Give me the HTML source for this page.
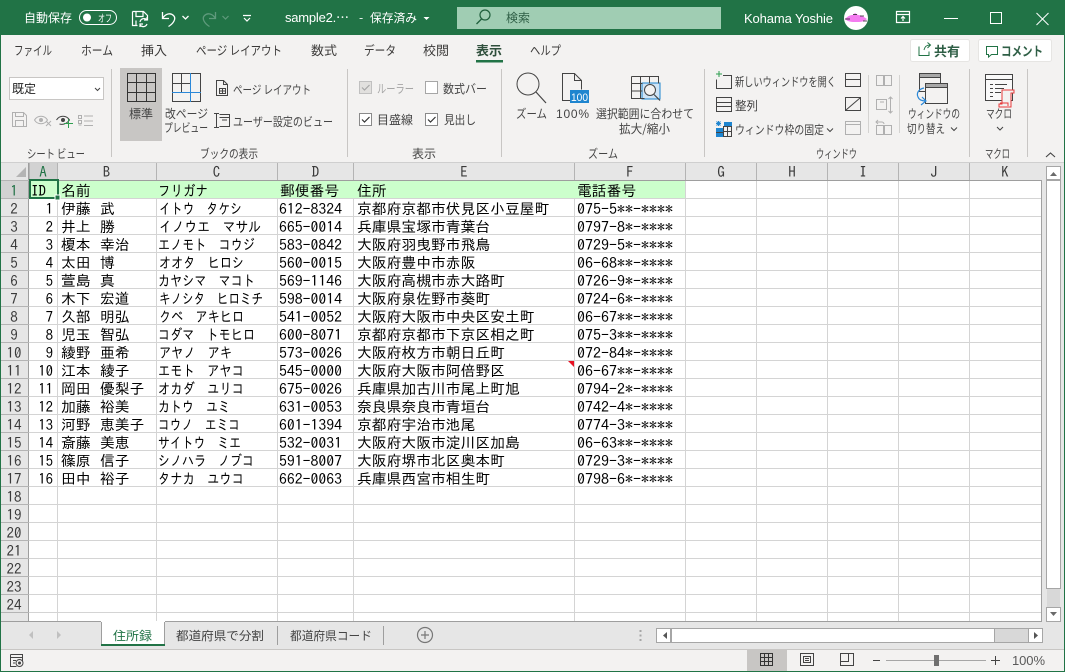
<!DOCTYPE html>
<html lang="ja"><head><meta charset="utf-8"><title>sample2</title>
<style>
html,body{margin:0;padding:0;background:#f3f2f1;overflow:hidden}
svg{display:block}
.c{font:14.8px "IPAGothic","Noto Sans CJK JP",monospace;fill:#000}
.h{font:15px "IPAGothic","Noto Sans CJK JP",monospace;fill:#3a3a3a;text-anchor:middle}
.r{font:12px "Noto Sans CJK JP","Liberation Sans",sans-serif;fill:#444}
.d{fill:#a6a6a6}
.t{font:12.5px "Noto Sans CJK JP","Liberation Sans",sans-serif;fill:#3b3a39}
.w{font:12px "Noto Sans CJK JP","Liberation Sans",sans-serif;fill:#fff}
.i{fill:none;stroke:#444;stroke-width:1}
.g{fill:none;stroke:#b0b0b0;stroke-width:1}
.k{fill:none;stroke:#fff;stroke-width:1.2}
</style></head><body>
<svg xmlns="http://www.w3.org/2000/svg" width="1065" height="672" viewBox="0 0 1065 672">
<rect width="1065" height="672" fill="#f3f2f1"/>

<!-- title bar -->
<rect width="1065" height="35" fill="#217346"/>
<text class="w" x="24" y="22" textLength="48" lengthAdjust="spacingAndGlyphs">自動保存</text>
<rect x="79.500" y="10.500" width="37" height="14" rx="7" fill="none" stroke="#fff"/>
<circle cx="87" cy="17.500" r="4" fill="#fff"/>
<text class="w" x="98" y="22" style="font-size:10px" textLength="14" lengthAdjust="spacingAndGlyphs">オフ</text>
<path class="k" d="M132.500 11.500h11l4 4v5M132.500 11.500v14h5M136 11.500v5h7v-5M136 25.500v-5"/>
<path class="k" d="M140 22a4 4 0 0 1 7-2M147 24a4 4 0 0 1-7 1M147 17v3h-3M140 27v-3h3"/>
<path d="M162.500 12v6.500h6.500M162.500 18.500c3-5 8-6 11-3c3 3 0 8-5 11" fill="none" stroke="#fff" stroke-width="1.300"/>
<path d="M182.500 16l3 3l3-3" fill="none" stroke="#fff" stroke-width="1.300"/>
<path d="M215.500 12v6.500h-6.500M215.500 18.500c-3-5-8-6-11-3c-3 3 0 8 5 11" fill="none" stroke="#5f9a7c" stroke-width="1.300"/>
<path d="M222.500 16l3 3l3-3" fill="none" stroke="#5f9a7c" stroke-width="1.200"/>
<path d="M243 15.500h8M244 18l3 3l3-3" fill="none" stroke="#fff" stroke-width="1.200"/>
<text class="w" x="285" y="22" style="font-family:'Liberation Sans','Noto Sans CJK JP',sans-serif;font-size:13px" textLength="64">sample2.⋯</text>
<text class="w" x="359" y="22">-</text>
<text class="w" x="370" y="22" textLength="47" lengthAdjust="spacingAndGlyphs">保存済み</text>
<path d="M423.500 17h6l-3 3z" fill="#fff"/>
<rect x="457" y="7" width="264" height="22" fill="#a0cdb3"/>
<circle cx="485" cy="15" r="5" fill="none" stroke="#1f5f3c" stroke-width="1.200"/>
<path d="M481.500 19l-5 5" stroke="#1f5f3c" stroke-width="1.300"/>
<text class="r" x="506" y="22" textLength="24" lengthAdjust="spacingAndGlyphs" style="fill:#2f5f46">検索</text>
<text x="744" y="23" style="font:13px 'Liberation Sans',sans-serif;fill:#fff" textLength="89">Kohama Yoshie</text>
<circle cx="856" cy="18" r="12" fill="#fff"/>
<path d="M845 19c3-3 5-4 8-4l2-2l3 2c3 0 6 2 9 4c-3 3-7 3-11 3c-4 0-8 0-11-3z" fill="#f47cf0"/>
<path d="M845 19h5M853 14.500h4M860 16h4M863 21h4" stroke="#222" stroke-width=".8" fill="none"/>
<path class="k" d="M896.500 11.500h13v11h-13zM896.500 14.500h13M903 21v-4M901 18.500l2-2l2 2" stroke-width="1"/>
<path d="M944 18.500h14" stroke="#fff"/>
<rect x="990.500" y="12.500" width="11" height="11" fill="none" stroke="#fff"/>
<path d="M1036.500 13l12 12M1048.500 13l-12 12" stroke="#fff"/>

<!-- ribbon tabs -->
<text class="t" x="14" y="55" textLength="38" lengthAdjust="spacingAndGlyphs">ファイル</text>
<text class="t" x="81" y="55" textLength="32" lengthAdjust="spacingAndGlyphs">ホーム</text>
<text class="t" x="141" y="55" textLength="26" lengthAdjust="spacingAndGlyphs">挿入</text>
<text class="t" x="196" y="55" textLength="86" lengthAdjust="spacingAndGlyphs">ページ レイアウト</text>
<text class="t" x="311" y="55" textLength="26" lengthAdjust="spacingAndGlyphs">数式</text>
<text class="t" x="364" y="55" textLength="32" lengthAdjust="spacingAndGlyphs">データ</text>
<text class="t" x="423" y="55" textLength="26" lengthAdjust="spacingAndGlyphs">校閲</text>
<text class="t" x="476" y="55" textLength="26" lengthAdjust="spacingAndGlyphs" style="font-weight:700;fill:#2f4f3c">表示</text>
<rect x="476" y="60" width="27" height="2.500" fill="#217346"/>
<text class="t" x="530" y="55" textLength="31" lengthAdjust="spacingAndGlyphs">ヘルプ</text>

<rect x="910.500" y="39.500" width="59" height="22" rx="2" fill="#fff" stroke="#e6e5e3"/>
<path d="M919 46.500v9h10v-4M924 50c1-4 3-5 6-5M927.500 42.500l3 2.500l-3 3" fill="none" stroke="#217346"/>
<text x="934" y="56" style="font:700 13px 'Noto Sans CJK JP',sans-serif;fill:#2f5f46" textLength="26" lengthAdjust="spacingAndGlyphs">共有</text>
<rect x="978.500" y="39.500" width="73" height="22" rx="2" fill="#fff" stroke="#e6e5e3"/>
<path d="M986.500 46.500h11v8h-6l-3 2.500v-2.500h-2z" fill="none" stroke="#217346"/>
<text x="1001" y="56" style="font:700 13px 'Noto Sans CJK JP',sans-serif;fill:#2f5f46" textLength="42" lengthAdjust="spacingAndGlyphs">コメント</text>

<!-- ribbon: sheet view -->
<rect x="9.500" y="77.500" width="94" height="22" fill="#fff" stroke="#c8c6c4"/>
<text class="r" x="12" y="93" textLength="24" lengthAdjust="spacingAndGlyphs" style="fill:#222">既定</text>
<path d="M95 88l2.500 2.500l2.500-2.500" class="i"/>
<path class="g" d="M12.500 112.500h11l3 3v11h-14zM15.500 112.500v4h8v-4M15.500 126.500v-6h8v6"/>
<path class="g" d="M34.500 120c3-5 10-5 13 0c-3 5-10 5-13 0zM46 121l5 5M51 121l-5 5"/><circle cx="41" cy="120" r="2" fill="#b0b0b0"/>
<path class="i" d="M56.500 120c3-5 10-5 13 0c-3 4-7 5-10 4"/><circle cx="63" cy="120" r="2" fill="#444"/>
<path d="M68.500 119v9M64 123.500h9" stroke="#2e9e4f"/>
<path class="g" d="M78.500 115.500h3v3h-3zM78.500 120.500h3v3h-3zM78.500 125h3M84 116h9M84 121h9M84 125.500h9"/>
<text class="r" x="27" y="158" textLength="58" lengthAdjust="spacingAndGlyphs">シート ビュー</text>
<rect x="111" y="69" width="1" height="88" fill="#c8c6c4"/>

<!-- ribbon: book views -->
<rect x="120" y="68" width="42" height="73" fill="#c8c6c4"/>
<path class="i" d="M127.500 73.500h28v28h-28zM127.500 82.500h28M127.500 92.500h28M136.500 73.500v28M146.500 73.500v28" style="stroke:#333"/>
<text class="r" x="129" y="118" textLength="24" lengthAdjust="spacingAndGlyphs">標準</text>
<path class="i" d="M172.500 73.500h28v28h-28zM172.500 83.500h18M181.500 73.500v19"/>
<path d="M172 92.500h29M190.500 73v29" stroke="#2b88d8" fill="none"/>
<text class="r" x="165" y="118" textLength="43" lengthAdjust="spacingAndGlyphs">改ページ</text>
<text class="r" x="164" y="132" textLength="44" lengthAdjust="spacingAndGlyphs">プレビュー</text>
<path class="i" d="M216.500 80.500h7l4 4v11h-11zM223.500 80.500v4h4M219.500 88.500h6v5h-6zM219.500 91h6M222.500 88.500v5"/>
<text class="r" x="233" y="94" textLength="78" lengthAdjust="spacingAndGlyphs">ページ レイアウト</text>
<path class="i" d="M214 113.500h5M214 127.500h5M216.500 113.500v14M219.500 114.500h10v12h-10M219.500 117.500h10M222 120h5"/>
<text class="r" x="233" y="126" textLength="100" lengthAdjust="spacingAndGlyphs">ユーザー設定のビュー</text>
<text class="r" x="200" y="158" textLength="58" lengthAdjust="spacingAndGlyphs">ブックの表示</text>
<rect x="347" y="69" width="1" height="88" fill="#c8c6c4"/>

<!-- ribbon: show -->
<rect x="359.500" y="81.500" width="12" height="12" fill="#e1e0de" stroke="#c0c0c0"/>
<path d="M362 87.500l2.500 2.500l5-5" fill="none" stroke="#a6a6a6" stroke-width="1.200"/>
<text class="r d" x="377" y="93" textLength="37" lengthAdjust="spacingAndGlyphs" style="fill:#a6a6a6">ルーラー</text>
<rect x="425.500" y="81.500" width="12" height="12" fill="#fff" stroke="#a6a6a6"/>
<text class="r" x="443" y="93" textLength="44" lengthAdjust="spacingAndGlyphs">数式バー</text>
<rect x="359.500" y="113.500" width="12" height="12" fill="#fff" stroke="#8a8a8a"/>
<path d="M362 119.500l2.500 2.500l5-5" fill="none" stroke="#333" stroke-width="1.200"/>
<text class="r" x="377" y="124" textLength="36" lengthAdjust="spacingAndGlyphs">目盛線</text>
<rect x="425.500" y="113.500" width="12" height="12" fill="#fff" stroke="#8a8a8a"/>
<path d="M428 119.500l2.500 2.500l5-5" fill="none" stroke="#333" stroke-width="1.200"/>
<text class="r" x="444" y="124" textLength="32" lengthAdjust="spacingAndGlyphs">見出し</text>
<text class="r" x="412" y="158" textLength="24" lengthAdjust="spacingAndGlyphs">表示</text>
<rect x="501" y="69" width="1" height="88" fill="#c8c6c4"/>

<!-- ribbon: zoom -->
<circle cx="528" cy="84" r="11" fill="none" stroke="#444" stroke-width="1"/>
<path d="M536 92l10 11" stroke="#444" stroke-width="1.200"/>
<text class="r" x="516" y="118" textLength="31" lengthAdjust="spacingAndGlyphs">ズーム</text>
<path class="i" d="M570 100.500h-7.500v-27h12l7 7v9M574.500 73.500v7h7"/>
<rect x="570" y="90" width="19" height="13" fill="#1e85cf"/>
<text x="571" y="101" style="font:11px 'Liberation Sans',sans-serif;fill:#fff" textLength="17" lengthAdjust="spacingAndGlyphs">100</text>
<text x="556" y="118" style="font:12px 'Liberation Sans',sans-serif;fill:#444" textLength="33">100%</text>
<rect x="642" y="83" width="18" height="16" fill="#cfe4f5" stroke="#1e85cf"/>
<path class="i" d="M631.500 76.500h27v7M631.500 76.500v22h13M631.500 83.500h11M631.500 91h11M640.500 76.500v22M649.500 76.500v7"/>
<circle cx="650" cy="90" r="5.500" fill="#f3f2f1" stroke="#444"/>
<path d="M654 94.500l6 6" stroke="#444" stroke-width="1.200"/>
<text class="r" x="596" y="118" textLength="98" lengthAdjust="spacingAndGlyphs">選択範囲に合わせて</text>
<text class="r" x="619" y="133" textLength="51" lengthAdjust="spacingAndGlyphs">拡大/縮小</text>
<text class="r" x="588" y="158" textLength="30" lengthAdjust="spacingAndGlyphs">ズーム</text>
<rect x="704" y="69" width="1" height="88" fill="#c8c6c4"/>

<!-- ribbon: window -->
<path class="i" d="M723 75.500h8.500v13h-15v-9"/><path d="M716 74h6M719 71v6" stroke="#2e9e4f" fill="none"/>
<text class="r" x="735" y="86" textLength="101" lengthAdjust="spacingAndGlyphs">新しいウィンドウを開く</text>
<path class="i" d="M716.500 97.500h15v14h-15zM716.500 102.500h15M716.500 106.500h15"/>
<text class="r" x="735" y="110" textLength="23" lengthAdjust="spacingAndGlyphs">整列</text>
<rect x="716" y="128" width="7" height="9" fill="#1e85cf"/><rect x="724" y="122" width="8" height="4" fill="#1e85cf"/>
<path d="M716 123.500h5M718.500 121v5M716.500 121.500l4 4M720.500 121.500l-4 4" stroke="#1e85cf" fill="none"/>
<path class="i" d="M723.500 126.500h8v10h-8zM723.500 131.500h8M727.500 126.500v10M716 132.500h7"/>
<text class="r" x="735" y="134" textLength="89" lengthAdjust="spacingAndGlyphs">ウィンドウ枠の固定</text>
<path class="i" d="M827 128.500l3 3l3-3"/>
<path class="i" d="M845.500 73.500h15v13h-15zM845.500 79.500h15"/>
<path class="i" d="M845.500 97.500h15v13h-15zM846 110l14-12"/>
<path class="g" d="M845.500 121.500h15v13h-15zM845.500 124.500h15"/>
<rect x="868" y="75" width="1" height="58" fill="#d4d3d1"/>
<path class="g" d="M876.500 75.500h7v10h-7zM884.500 75.500h7v10h-7z"/>
<path class="g" d="M876.500 99.500h10v10h-10zM880 102h4M890.500 97v16M888.500 99l2-2l2 2M888.500 111l2 2l2-2"/>
<path class="g" d="M876.500 125.500h7v9h-7zM884.500 125.500h7v9h-7zM878 120l-2 2l2 2M876 122h6c1 0 2 1 2 2"/>
<rect x="899" y="75" width="1" height="58" fill="#d4d3d1"/>
<rect x="919.500" y="73.500" width="21" height="18" fill="#f3f2f1" stroke="#444"/><rect x="919.500" y="73.500" width="21" height="4" fill="#a8a8a8" stroke="#444"/>
<rect x="925.500" y="83.500" width="22" height="20" fill="#f3f2f1" stroke="#444"/><rect x="925.500" y="83.500" width="22" height="4" fill="#a8a8a8" stroke="#444"/>
<path d="M924 88c-5 1-8 5-6 9c1 3 4 4 8 4M921 105l5-4l-4-4" fill="none" stroke="#2b88d8" stroke-width="1.200"/>
<text class="r" x="908" y="118" textLength="52" lengthAdjust="spacingAndGlyphs">ウィンドウの</text>
<text class="r" x="907" y="133" textLength="38" lengthAdjust="spacingAndGlyphs">切り替え</text>
<path class="i" d="M951 127.500l3 3l3-3"/>
<text class="r" x="816" y="158" textLength="41" lengthAdjust="spacingAndGlyphs">ウィンドウ</text>
<rect x="969" y="69" width="1" height="88" fill="#c8c6c4"/>

<!-- ribbon: macro -->
<rect x="985.500" y="74.500" width="27" height="26" fill="#f9f9f9" stroke="#444"/>
<path class="i" d="M985.500 79.500h27M990 84.500h3M995 84.500h12M990 88.500h3M995 88.500h9M990 92.500h3M995 92.500h6M990 96.500h3"/>
<path d="M1002 90h12v3h-3v14h-12v-3h3zM1014 90v3M1000 103h8v3" fill="#f3f2f1" stroke="#e83a3a"/>
<text class="r" x="986" y="118" textLength="26" lengthAdjust="spacingAndGlyphs">マクロ</text>
<path class="i" d="M997 127l3 3l3-3"/>
<text class="r" x="985" y="158" textLength="25" lengthAdjust="spacingAndGlyphs">マクロ</text>
<rect x="1027" y="69" width="1" height="88" fill="#c8c6c4"/>
<path d="M1046 157l4.500-4l4.500 4" fill="none" stroke="#444" stroke-width="1.100"/>

<!-- sheet area -->
<rect x="0" y="162" width="1065" height="1" fill="#cfcfcf"/>
<rect x="1" y="163" width="1063" height="459" fill="#e6e6e6"/>
<rect x="29" y="181" width="1012" height="441" fill="#fff"/>
<rect x="29" y="163" width="28" height="17" fill="#d2d2d2"/>
<rect x="1" y="181" width="28" height="17" fill="#d2d2d2"/>
<path d="M26 167v10h-10z" fill="#b4b4b4"/>
<path d="M57.500 163v17M156.500 163v17M277.500 163v17M353.500 163v17M574.500 163v17M685.500 163v17M756.500 163v17M827.500 163v17M898.500 163v17M969.500 163v17M29.500 163v17" stroke="#b4b4b4" fill="none"/>
<rect x="29" y="180" width="1012" height="1" fill="#9e9e9e"/>
<rect x="28" y="163" width="1" height="459" fill="#9e9e9e"/>
<rect x="1" y="180" width="28" height="1" fill="#b4b4b4"/>
<path d="M1 198.500h28M1 216.500h28M1 234.500h28M1 252.500h28M1 270.500h28M1 288.500h28M1 306.500h28M1 324.500h28M1 342.500h28M1 360.500h28M1 378.500h28M1 396.500h28M1 414.500h28M1 432.500h28M1 450.500h28M1 468.500h28M1 486.500h28M1 504.500h28M1 522.500h28M1 540.500h28M1 558.500h28M1 576.500h28M1 594.500h28M1 612.500h28" stroke="#b4b4b4" fill="none"/>
<path d="M29 198.500h1012M29 216.500h1012M29 234.500h1012M29 252.500h1012M29 270.500h1012M29 288.500h1012M29 306.500h1012M29 324.500h1012M29 342.500h1012M29 360.500h1012M29 378.500h1012M29 396.500h1012M29 414.500h1012M29 432.500h1012M29 450.500h1012M29 468.500h1012M29 486.500h1012M29 504.500h1012M29 522.500h1012M29 540.500h1012M29 558.500h1012M29 576.500h1012M29 594.500h1012M29 612.500h1012M57.500 181v441M156.500 181v441M277.500 181v441M353.500 181v441M574.500 181v441M685.500 181v441M756.500 181v441M827.500 181v441M898.500 181v441M969.500 181v441" stroke="#d4d4d4" fill="none"/>
<rect x="29" y="181" width="656" height="17" fill="#ccffcc"/>
<rect x="1041" y="180" width="1" height="442" fill="#a0a0a0"/>

<!-- column headers -->
<text class="h" x="43" y="177" style="fill:#217346">A</text>
<text class="h" x="106.500" y="177">B</text>
<text class="h" x="216.500" y="177">C</text>
<text class="h" x="315.500" y="177">D</text>
<text class="h" x="464" y="177">E</text>
<text class="h" x="630" y="177">F</text>
<text class="h" x="721" y="177">G</text>
<text class="h" x="792" y="177">H</text>
<text class="h" x="863" y="177">I</text>
<text class="h" x="934" y="177">J</text>
<text class="h" x="1005" y="177">K</text>

<!-- row headers -->
<text class="h" x="14" y="196" style="fill:#217346">1</text>
<text class="h" x="14" y="214">2</text>
<text class="h" x="14" y="232">3</text>
<text class="h" x="14" y="250">4</text>
<text class="h" x="14" y="268">5</text>
<text class="h" x="14" y="286">6</text>
<text class="h" x="14" y="304">7</text>
<text class="h" x="14" y="322">8</text>
<text class="h" x="14" y="340">9</text>
<text class="h" x="14" y="358">10</text>
<text class="h" x="14" y="376">11</text>
<text class="h" x="14" y="394">12</text>
<text class="h" x="14" y="412">13</text>
<text class="h" x="14" y="430">14</text>
<text class="h" x="14" y="448">15</text>
<text class="h" x="14" y="466">16</text>
<text class="h" x="14" y="484">17</text>
<text class="h" x="14" y="502">18</text>
<text class="h" x="14" y="520">19</text>
<text class="h" x="14" y="538">20</text>
<text class="h" x="14" y="556">21</text>
<text class="h" x="14" y="574">22</text>
<text class="h" x="14" y="592">23</text>
<text class="h" x="14" y="610">24</text>

<!-- cells -->
<g class="c">
<g transform="translate(0,196)"><text x="31" textLength="15" lengthAdjust="spacingAndGlyphs">ID</text><text x="61">名前</text><text x="158" textLength="50" lengthAdjust="spacingAndGlyphs">フリガナ</text><text x="280">郵便番号</text><text x="357">住所</text><text x="577">電話番号</text></g>
<g transform="translate(0,214)"><text x="53" text-anchor="end">1</text><text x="61">伊藤</text><text x="100">武</text><text x="159" textLength="83" lengthAdjust="spacingAndGlyphs">イトウ　タケシ</text><text x="279" textLength="63" lengthAdjust="spacingAndGlyphs">612-8324</text><text x="357">京都府京都市伏見区小豆屋町</text><text x="577" textLength="96" lengthAdjust="spacingAndGlyphs">075-5**-****</text></g>
<g transform="translate(0,232)"><text x="53" text-anchor="end">2</text><text x="61">井上</text><text x="100">勝</text><text x="159" textLength="102" lengthAdjust="spacingAndGlyphs">イノウエ　マサル</text><text x="279" textLength="63" lengthAdjust="spacingAndGlyphs">665-0014</text><text x="357">兵庫県宝塚市青葉台</text><text x="577" textLength="96" lengthAdjust="spacingAndGlyphs">0797-8*-****</text></g>
<g transform="translate(0,250)"><text x="53" text-anchor="end">3</text><text x="61">榎本</text><text x="100">幸治</text><text x="158" textLength="97" lengthAdjust="spacingAndGlyphs">エノモト　コウジ</text><text x="279" textLength="63" lengthAdjust="spacingAndGlyphs">583-0842</text><text x="357">大阪府羽曳野市飛鳥</text><text x="577" textLength="96" lengthAdjust="spacingAndGlyphs">0729-5*-****</text></g>
<g transform="translate(0,268)"><text x="53" text-anchor="end">4</text><text x="61">太田</text><text x="100">博</text><text x="159" textLength="85" lengthAdjust="spacingAndGlyphs">オオタ　ヒロシ</text><text x="279" textLength="63" lengthAdjust="spacingAndGlyphs">560-0015</text><text x="357">大阪府豊中市赤阪</text><text x="577" textLength="96" lengthAdjust="spacingAndGlyphs">06-68**-****</text></g>
<g transform="translate(0,286)"><text x="53" text-anchor="end">5</text><text x="61">萱島</text><text x="100">真</text><text x="158" textLength="97" lengthAdjust="spacingAndGlyphs">カヤシマ　マコト</text><text x="279" textLength="63" lengthAdjust="spacingAndGlyphs">569-1146</text><text x="357">大阪府高槻市赤大路町</text><text x="577" textLength="96" lengthAdjust="spacingAndGlyphs">0726-9*-****</text></g>
<g transform="translate(0,304)"><text x="53" text-anchor="end">6</text><text x="61">木下</text><text x="100">宏道</text><text x="159" textLength="104" lengthAdjust="spacingAndGlyphs">キノシタ　ヒロミチ</text><text x="279" textLength="63" lengthAdjust="spacingAndGlyphs">598-0014</text><text x="357">大阪府泉佐野市葵町</text><text x="577" textLength="96" lengthAdjust="spacingAndGlyphs">0724-6*-****</text></g>
<g transform="translate(0,322)"><text x="53" text-anchor="end">7</text><text x="61">久部</text><text x="100">明弘</text><text x="159" textLength="85" lengthAdjust="spacingAndGlyphs">クベ　アキヒロ</text><text x="279" textLength="63" lengthAdjust="spacingAndGlyphs">541-0052</text><text x="357">大阪府大阪市中央区安土町</text><text x="577" textLength="96" lengthAdjust="spacingAndGlyphs">06-67**-****</text></g>
<g transform="translate(0,340)"><text x="53" text-anchor="end">8</text><text x="61">児玉</text><text x="100">智弘</text><text x="158" textLength="97" lengthAdjust="spacingAndGlyphs">コダマ　トモヒロ</text><text x="279" textLength="63" lengthAdjust="spacingAndGlyphs">600-8071</text><text x="357">京都府京都市下京区相之町</text><text x="577" textLength="96" lengthAdjust="spacingAndGlyphs">075-3**-****</text></g>
<g transform="translate(0,358)"><text x="53" text-anchor="end">9</text><text x="61">綾野</text><text x="100">亜希</text><text x="159" textLength="73" lengthAdjust="spacingAndGlyphs">アヤノ　アキ</text><text x="279" textLength="63" lengthAdjust="spacingAndGlyphs">573-0026</text><text x="357">大阪府枚方市朝日丘町</text><text x="577" textLength="96" lengthAdjust="spacingAndGlyphs">072-84*-****</text></g>
<g transform="translate(0,376)"><text x="53" text-anchor="end">10</text><text x="61">江本</text><text x="100">綾子</text><text x="158" textLength="86" lengthAdjust="spacingAndGlyphs">エモト　アヤコ</text><text x="279" textLength="63" lengthAdjust="spacingAndGlyphs">545-0000</text><text x="357">大阪府大阪市阿倍野区</text><text x="577" textLength="96" lengthAdjust="spacingAndGlyphs">06-67**-****</text></g>
<g transform="translate(0,394)"><text x="53" text-anchor="end">11</text><text x="61">岡田</text><text x="100">優梨子</text><text x="158" textLength="86" lengthAdjust="spacingAndGlyphs">オカダ　ユリコ</text><text x="279" textLength="63" lengthAdjust="spacingAndGlyphs">675-0026</text><text x="357">兵庫県加古川市尾上町旭</text><text x="577" textLength="96" lengthAdjust="spacingAndGlyphs">0794-2*-****</text></g>
<g transform="translate(0,412)"><text x="53" text-anchor="end">12</text><text x="61">加藤</text><text x="100">裕美</text><text x="158" textLength="72" lengthAdjust="spacingAndGlyphs">カトウ　ユミ</text><text x="279" textLength="63" lengthAdjust="spacingAndGlyphs">631-0053</text><text x="357">奈良県奈良市青垣台</text><text x="577" textLength="96" lengthAdjust="spacingAndGlyphs">0742-4*-****</text></g>
<g transform="translate(0,430)"><text x="53" text-anchor="end">13</text><text x="61">河野</text><text x="100">恵美子</text><text x="158" textLength="82" lengthAdjust="spacingAndGlyphs">コウノ　エミコ</text><text x="279" textLength="63" lengthAdjust="spacingAndGlyphs">601-1394</text><text x="357">京都府宇治市池尾</text><text x="577" textLength="96" lengthAdjust="spacingAndGlyphs">0774-3*-****</text></g>
<g transform="translate(0,448)"><text x="53" text-anchor="end">14</text><text x="61">斎藤</text><text x="100">美恵</text><text x="158" textLength="83" lengthAdjust="spacingAndGlyphs">サイトウ　ミエ</text><text x="279" textLength="63" lengthAdjust="spacingAndGlyphs">532-0031</text><text x="357">大阪府大阪市淀川区加島</text><text x="577" textLength="96" lengthAdjust="spacingAndGlyphs">06-63**-****</text></g>
<g transform="translate(0,466)"><text x="53" text-anchor="end">15</text><text x="61">篠原</text><text x="100">信子</text><text x="158" textLength="96" lengthAdjust="spacingAndGlyphs">シノハラ　ノブコ</text><text x="279" textLength="63" lengthAdjust="spacingAndGlyphs">591-8007</text><text x="357">大阪府堺市北区奥本町</text><text x="577" textLength="96" lengthAdjust="spacingAndGlyphs">0729-3*-****</text></g>
<g transform="translate(0,484)"><text x="53" text-anchor="end">16</text><text x="61">田中</text><text x="100">裕子</text><text x="158" textLength="86" lengthAdjust="spacingAndGlyphs">タナカ　ユウコ</text><text x="279" textLength="63" lengthAdjust="spacingAndGlyphs">662-0063</text><text x="357">兵庫県西宮市相生町</text><text x="577" textLength="96" lengthAdjust="spacingAndGlyphs">0798-6*-****</text></g>
</g>
<path d="M568 361h6v6z" fill="#e81123"/>

<!-- selected cell -->
<rect x="30" y="180" width="28" height="18" fill="none" stroke="#217346" stroke-width="2"/>
<rect x="55" y="195" width="5" height="5" fill="#217346" stroke="#fff"/>

<!-- vertical scrollbar -->
<rect x="1046.500" y="166.500" width="14" height="13" fill="#fff" stroke="#a6a6a6"/>
<path d="M1050 176l3.500-4l3.500 4z" fill="#6a6a6a"/>
<rect x="1046.500" y="180.500" width="14" height="408" fill="#fff" stroke="#a6a6a6"/>
<rect x="1047" y="589" width="13" height="18" fill="#d8d8d8"/>
<rect x="1046.500" y="607.500" width="14" height="14" fill="#fff" stroke="#a6a6a6"/>
<path d="M1050 612h7l-3.500 4z" fill="#6a6a6a"/>

<!-- tabs bar -->
<rect x="1" y="622" width="1063" height="28" fill="#e6e6e6"/>
<rect x="1" y="621" width="1041" height="1" fill="#9e9e9e"/>
<rect x="1" y="649" width="1063" height="1" fill="#c8c6c4"/>
<path d="M33 631v8l-4-4z" fill="#c0c0c0"/><path d="M57 631v8l4-4z" fill="#c0c0c0"/>
<rect x="101" y="621" width="64" height="24" fill="#fff"/>
<path d="M101.500 622v24M164.500 622v24" stroke="#9e9e9e"/>
<rect x="101" y="644" width="64" height="2" fill="#217346"/>
<text class="r" x="113" y="640" textLength="39" lengthAdjust="spacingAndGlyphs" style="fill:#217346">住所録</text>
<text class="r" x="176" y="640" textLength="88" lengthAdjust="spacingAndGlyphs">都道府県で分割</text>
<rect x="277" y="626" width="1" height="19" fill="#9e9e9e"/>
<text class="r" x="290" y="640" textLength="82" lengthAdjust="spacingAndGlyphs">都道府県コード</text>
<rect x="383" y="626" width="1" height="19" fill="#9e9e9e"/>
<circle cx="425" cy="635" r="7.500" fill="none" stroke="#777" stroke-width="1.200"/>
<path d="M421 635h8M425 631v8" stroke="#777" stroke-width="1.200"/>
<path d="M640.500 630v2M640.500 634.500v2M640.500 639v2" stroke="#a6a6a6" stroke-width="2"/>
<rect x="656.500" y="628.500" width="386" height="14" fill="#d8d8d8" stroke="#a6a6a6"/>
<rect x="671.500" y="628.500" width="323" height="14" fill="#fff" stroke="#a6a6a6"/>
<rect x="656.500" y="628.500" width="14" height="14" fill="#fff" stroke="#a6a6a6"/>
<path d="M667 632v7l-4-3.500z" fill="#555"/>
<rect x="1028.500" y="628.500" width="14" height="14" fill="#fff" stroke="#a6a6a6"/>
<path d="M1034 632v7l4-3.500z" fill="#555"/>

<!-- status bar -->
<path class="i" d="M10.500 654.500h12v9M10.500 654.500v12h6M10.500 657.500h12M13 660.500h3M13 663h2"/>
<circle cx="19.500" cy="663" r="3.500" fill="#f3f2f1" stroke="#444"/><circle cx="19.500" cy="663" r="1.500" fill="#444"/>
<rect x="747" y="650" width="40" height="21" fill="#c8c6c4"/>
<path d="M760.500 653.500h12v12h-12zM760.500 657.500h12M760.500 661.500h12M764.500 653.500v12M768.500 653.500v12" fill="none" stroke="#333"/>
<path class="i" d="M800.500 653.500h13v12h-13zM803.500 656.500h7v6h-7zM805 658.500h4M805 660.500h4"/>
<path class="i" d="M840.500 653.500h13v12h-13zM840.500 661.500h8v-8"/>
<path d="M873 660.500h7" stroke="#444"/>
<rect x="886" y="660" width="100" height="1" fill="#a6a6a6"/>
<rect x="934" y="655" width="5" height="11" fill="#707070"/>
<path d="M991 660.500h9M995.500 656v9" stroke="#444"/>
<text x="1012" y="665" style="font:13px 'Liberation Sans',sans-serif;fill:#5a5a5a" textLength="33">100%</text>

<!-- window border -->
<rect x="0" y="35" width="1" height="637" fill="#217346"/>
<rect x="1064" y="35" width="1" height="637" fill="#217346"/>
<rect x="0" y="671" width="1065" height="1" fill="#217346"/>
</svg>
</body></html>
